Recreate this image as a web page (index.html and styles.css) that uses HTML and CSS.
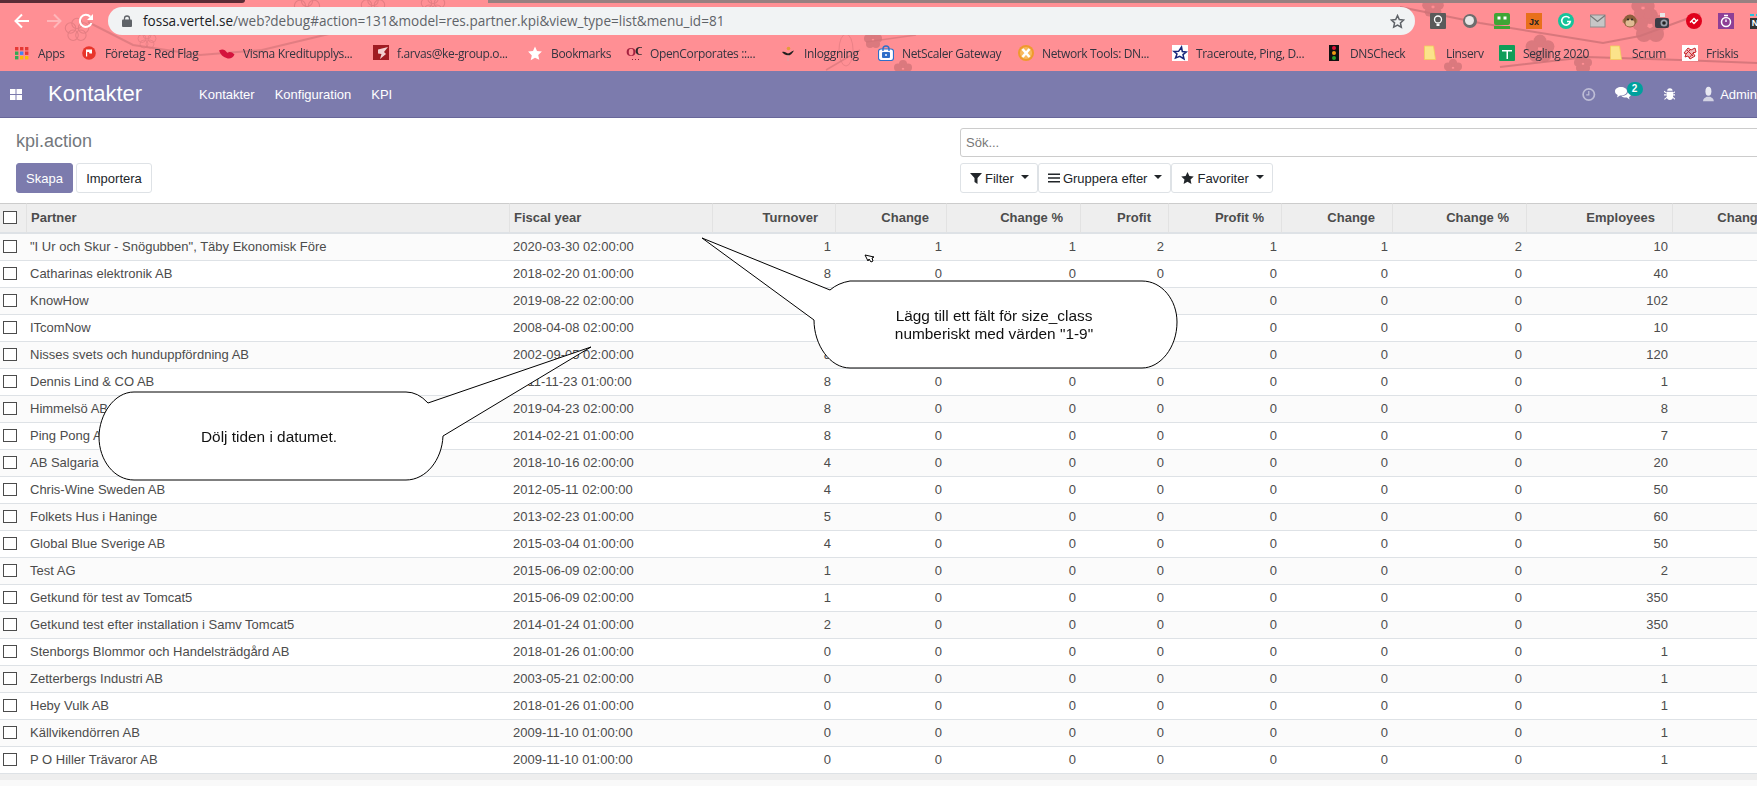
FILE: index.html
```html
<!DOCTYPE html>
<html lang="sv">
<head>
    <meta charset="UTF-8">
    <meta name="viewport" content="width=device-width, initial-scale=1.0">
    <title>kpi.action - Odoo</title>
    <link rel="stylesheet" href="styles.css">
</head>
<body>
    <!-- browser window -->
    <div class="browser">
        <svg class="theme-art" width="1757" height="71" viewBox="0 0 1757 71">
            <defs>
                <g id="petals"><circle cx="0" cy="-5" r="4"/><circle cx="5" cy="-1.500" r="4"/><circle cx="3" cy="4" r="4"/><circle cx="-3" cy="4" r="4"/><circle cx="-5" cy="-1.500" r="4"/></g>
            </defs>
            <g fill="none" stroke="#cf7277" opacity=".6">
                <path stroke-width="2" d="M88 22 L133 45 L200 55 L262 50 L333 33 L370 18"/>
                <path stroke-width="1.500" d="M826 70 L860 50 M866 42 L916 35"/>
            </g>
            <g fill="none" stroke="#cf7277" stroke-width="2" opacity=".8">
                <path d="M1400 7 L1480 23 L1603 43 L1640 36 L1700 14"/>
                <path d="M1500 67 L1587 57 L1680 60 L1757 63"/>
            </g>
            <g fill="none" stroke="#d9777c" stroke-width=".800" opacity=".7">
                <use href="#petals" transform="translate(77 30) scale(1.300)"/>
                <use href="#petals" transform="translate(147 40)"/>
                <use href="#petals" transform="translate(307 8) scale(1.400)"/>
                <use href="#petals" transform="translate(373 7) scale(1.300)"/>
                <use href="#petals" transform="translate(433 5) scale(1.300)"/>
                <ellipse cx="846" cy="50" rx="7" ry="16"/>
            </g>
            <g fill="#cf7277" opacity=".75">
                <use href="#petals" transform="translate(873 40)"/>
                <use href="#petals" transform="translate(903 69)"/>
                <use href="#petals" transform="translate(1433 7) scale(1.200)"/>
                <use href="#petals" transform="translate(1453 68)"/>
                <use href="#petals" transform="translate(1540 49) scale(1.600)"/>
                <use href="#petals" transform="translate(1583 64)"/>
                <use href="#petals" transform="translate(1650 26) scale(2)"/>
                <use href="#petals" transform="translate(1643 8) scale(1.300)"/>
            </g>
        </svg>
        <div class="tabstrip">
            <div class="tab-dark"></div>
            <div class="tab-gap"></div>
            <div class="tab-rest"></div>
        </div>
        <div class="toolbar">
            <div class="nav-arrows">
                <svg width="16" height="16" viewBox="0 0 16 16"><path d="M15 8H2M8 1.500L1.500 8 8 14.500" fill="none" stroke="#fff" stroke-width="2"/></svg>
                <svg class="arrow-off" width="16" height="16" viewBox="0 0 16 16"><path d="M1 8H14M8 1.500L14.500 8 8 14.500" fill="none" stroke="#fff" stroke-width="2"/></svg>
                <svg width="16" height="16" viewBox="0 0 16 16"><path d="M13.500 10A6 6 0 1 1 12.300 3.800" fill="none" stroke="#fff" stroke-width="2"/><path d="M15 1v6H9z" fill="#fff"/></svg>
            </div>
            <div class="address-bar">
                <svg class="lock" width="10" height="12" viewBox="0 0 10 12"><path d="M2.500 5V3.500a2.500 2.500 0 0 1 5 0V5" fill="none" stroke="#5f6368" stroke-width="1.300"/><rect y="4.500" width="10" height="7.500" rx="1" fill="#5f6368"/></svg>
                <span class="url"><span class="url-host">fossa.vertel.se</span>/web?debug#action=131&amp;model=res.partner.kpi&amp;view_type=list&amp;menu_id=81</span>
                <svg class="url-star" width="15" height="15" viewBox="0 0 24 24"><path d="M12 2.500l2.900 6.300 6.900.8-5.100 4.700 1.400 6.800L12 17.600 5.900 21l1.400-6.800L2.200 9.600l6.900-.8z" fill="none" stroke="#5f6368" stroke-width="2.400"/></svg>
            </div>
            <div class="extensions">
                <svg width="16" height="16" viewBox="0 0 16 16"><rect width="16" height="16" rx="1" fill="#5a5a5a"/><circle cx="8" cy="6.500" r="3.500" fill="none" stroke="#fff" stroke-width="1.300"/><path d="M6.500 11h3v2h-3z" fill="#fff"/></svg>
                <svg width="16" height="16" viewBox="0 0 16 16"><circle cx="8" cy="8" r="7" fill="#6d6d6d"/><circle cx="7.500" cy="7.500" r="4.500" fill="#e8e8e8"/></svg>
                <svg width="16" height="16" viewBox="0 0 16 16"><rect width="16" height="12" rx="2" fill="#3fa535"/><rect x="3.500" y="3.500" width="3" height="3" fill="#fff"/><rect x="9.500" y="3.500" width="3" height="3" fill="#fff"/><rect y="13" width="16" height="3" fill="#3fa535"/></svg>
                <svg width="16" height="16" viewBox="0 0 16 16"><rect width="16" height="16" fill="#e8701a"/><text x="8" y="12" class="ext-label">Jx</text></svg>
                <svg width="16" height="16" viewBox="0 0 16 16"><circle cx="8" cy="8" r="8" fill="#15c39a"/><path d="M11.500 5.200A4.300 4.300 0 1 0 12.300 8.500H9" fill="none" stroke="#fff" stroke-width="1.600"/></svg>
                <svg width="16" height="16" viewBox="0 0 16 16"><rect y="2" width="15" height="12" fill="#c6c6c6" stroke="#8c8c8c"/><path d="M0 2.500l7.500 6 7.500-6" fill="none" stroke="#777" stroke-width="1.200"/></svg>
                <svg width="16" height="16" viewBox="0 0 16 16"><circle cx="2.500" cy="8" r="2.200" fill="#b5865c"/><circle cx="13.500" cy="8" r="2.200" fill="#b5865c"/><circle cx="8" cy="8" r="6.500" fill="#8b5e3c"/><ellipse cx="8" cy="10" rx="4.500" ry="3.500" fill="#e0bc94"/><circle cx="6" cy="6.500" r="1" fill="#222"/><circle cx="10" cy="6.500" r="1" fill="#222"/></svg>
                <svg width="16" height="16" viewBox="0 0 16 16"><rect x="6" y="0" width="5" height="4" fill="#e8e8e8"/><rect x="1" y="5" width="14" height="10" rx="2" fill="#3c3c46"/><circle cx="10" cy="10" r="3.500" fill="#9aa0aa"/><circle cx="10" cy="10" r="1.800" fill="#222"/></svg>
                <svg width="16" height="16" viewBox="0 0 16 16"><circle cx="8" cy="8" r="8" fill="#e0001b"/><path d="M4 9.500l4-4 2 2M12 6.500l-4 4-2-2" fill="none" stroke="#fff" stroke-width="1.400"/></svg>
                <svg width="16" height="16" viewBox="0 0 16 16"><rect width="16" height="16" fill="#8e3f96"/><circle cx="8" cy="9" r="4.500" fill="none" stroke="#fff" stroke-width="1.500"/><path d="M6 2.500h4M8 9V6.500" stroke="#fff" stroke-width="1.400"/></svg>
                <svg width="16" height="16" viewBox="0 0 16 16"><rect y="5" width="16" height="11" fill="#333"/><path d="M0 2h4M6 2h4M12 2h4" stroke="#24c6dc" stroke-width="2"/><text x="8" y="13" class="ext-label ext-light">NE</text></svg>
            </div>
        </div>
        <div class="bookmarks">
            <div class="bookmark"><svg width="16" height="16" viewBox="0 0 16 16"><rect x="1" y="2" width="3.400" height="3.400" fill="#e53935"/><rect x="6" y="2" width="3.400" height="3.400" fill="#e53935"/><rect x="11" y="2" width="3.400" height="3.400" fill="#e53935"/><rect x="1" y="6.500" width="3.400" height="3.400" fill="#34a853"/><rect x="6" y="6.500" width="3.400" height="3.400" fill="#4285f4"/><rect x="11" y="6.500" width="3.400" height="3.400" fill="#e53935"/><rect x="1" y="11" width="3.400" height="3.400" fill="#34a853"/><rect x="6" y="11" width="3.400" height="3.400" fill="#fbbc05"/><rect x="11" y="11" width="3.400" height="3.400" fill="#fbbc05"/></svg><span>Apps</span></div>
            <div class="bookmark"><svg width="16" height="16" viewBox="0 0 16 16"><circle cx="8" cy="8" r="6.800" fill="#e8352b"/><path d="M5 4.500h6v4H8.500L8 7H6.200v4.500H5z" fill="#fff"/></svg><span>Företag - Red Flag</span></div>
            <div class="bookmark"><svg width="16" height="16" viewBox="0 0 16 16"><path d="M0 5.500C4 3.500 6 5 8 7.500c2.500-1 5-1 7.500 2-1.500 3.500-5 5-8 3.500C4 12 1.500 9.500 0 5.500z" fill="#d4133c"/><path d="M6 2l3 5.500" stroke="#ff8f94" stroke-width="1.200"/></svg><span>Visma Kreditupplys...</span></div>
            <div class="bookmark"><svg width="16" height="16" viewBox="0 0 16 16"><rect width="16" height="15" fill="#a01c22"/><path d="M5 4.500l10-2.500-4 5 2 2-6 5 1.500-5L5 8.500z" fill="#f3d0d0"/></svg><span>f.arvas@ke-group.o...</span></div>
            <div class="bookmark"><svg width="16" height="16" viewBox="0 0 16 16"><path d="M8 1.500l2 4.600 4.900.5-3.700 3.300 1.100 4.900L8 12.700l-4.300 2.600 1.100-4.900L1.100 6.600 6 6.100z" fill="#fff"/></svg><span>Bookmarks</span></div>
            <div class="bookmark"><svg width="16" height="16" viewBox="0 0 16 16"><text x="0" y="11" class="oc-label">O</text><text x="9" y="10" class="oc-label oc-dark">C</text><path d="M6 14.500h1M9 14.500h1M12 14.500h1" stroke="#8a1c38"/></svg><span>OpenCorporates ::...</span></div>
            <div class="bookmark"><svg width="16" height="16" viewBox="0 0 16 16"><path d="M2 7c3-1 4 1 6 1.500 2-.5 3-2 6-3-1.500 3-4 5-6 5C5.500 10 4 9.500 2 7z" fill="#1f1f1f"/><circle cx="8.500" cy="3.500" r="1.800" fill="#e59b3a"/><path d="M8 10v6" stroke="#d9a5a7"/></svg><span>Inloggning</span></div>
            <div class="bookmark"><svg width="16" height="16" viewBox="0 0 16 16"><rect x=".5" y="4" width="15" height="11.500" rx="2.500" fill="#fff" stroke="#2f6fc9" stroke-width="1.200"/><path d="M5 6V4a3 3 0 0 1 6 0v2" fill="none" stroke="#2f6fc9" stroke-width="1.400"/><rect x="4" y="7" width="8" height="6" rx="1" fill="#2f6fc9"/><circle cx="8" cy="10" r="1" fill="#fff"/></svg><span>NetScaler Gateway</span></div>
            <div class="bookmark"><svg width="16" height="16" viewBox="0 0 16 16"><circle cx="8" cy="8" r="8" fill="#ef9a2d"/><circle cx="8" cy="8" r="6" fill="#f7b95e"/><path d="M4.500 4l7 8M11.500 4l-7 8" stroke="#fff" stroke-width="2.600"/></svg><span>Network Tools: DN...</span></div>
            <div class="bookmark"><svg width="16" height="16" viewBox="0 0 16 16"><rect width="16" height="16" fill="#fff"/><path d="M9.500 2l.8 4.500 4 .5-3.300 2.600 1 4.400-4.200-2.700L3.500 13l1.500-4L2 6.500l4.600-.2z" fill="#fff" stroke="#15267a" stroke-width="1.500"/></svg><span>Traceroute, Ping, D...</span></div>
            <div class="bookmark"><svg width="16" height="16" viewBox="0 0 16 16"><rect x="3" width="10" height="16" fill="#111"/><circle cx="8" cy="3" r="2" fill="#e0123a"/><circle cx="8" cy="8" r="2" fill="#f39c12"/><circle cx="8" cy="13" r="2" fill="#2ca02c"/></svg><span>DNSCheck</span></div>
            <div class="bookmark"><svg width="16" height="16" viewBox="0 0 16 16"><path d="M2.500 1h9l2 13.500h-11z" fill="#fbe38a" stroke="#f0ce5a" stroke-width=".800"/></svg><span>Linserv</span></div>
            <div class="bookmark"><svg width="16" height="16" viewBox="0 0 16 16"><rect width="16" height="16" rx="1" fill="#0f9d58"/><path d="M3 5h10v1.500H9V14H7.500V6.500H3z" fill="#fff"/></svg><span>Segling 2020</span></div>
            <div class="bookmark"><svg width="16" height="16" viewBox="0 0 16 16"><path d="M2.500 1h9l2 13.500h-11z" fill="#fbe38a" stroke="#f0ce5a" stroke-width=".800"/></svg><span>Scrum</span></div>
            <div class="bookmark"><svg width="16" height="16" viewBox="0 0 16 16"><rect width="16" height="16" fill="#fff"/><path d="M2 8l4-5 3 2 4-2 1 4-3 1 2 3-5 3-2-3-3 1 1-3zM5 5l6 6M4 9l5-5M7 13l5-6" fill="#f2b8ba" stroke="#c8262c" stroke-width="1"/></svg><span>Friskis</span></div>
        </div>
    </div>

    <!-- odoo menu -->
    <header class="main-navbar">
        <svg class="apps-icon" width="12" height="11" viewBox="0 0 12 11"><path d="M0 0h5.500v5H0zM6.500 0H12v5H6.500zM0 6h5.500v5H0zM6.500 6H12v5H6.500z" fill="#fff"/></svg>
        <a class="brand">Kontakter</a>
        <nav class="main-menu">
            <a>Kontakter</a>
            <a>Konfiguration</a>
            <a>KPI</a>
        </nav>
        <div class="systray">
            <svg class="clock" width="15" height="15" viewBox="0 0 16 16"><circle cx="8" cy="8" r="6.700" fill="none" stroke="#fff" stroke-width="2"/><path d="M8 4v4.500H5" fill="none" stroke="#fff" stroke-width="1.500"/></svg>
            <div class="chat">
                <svg width="16" height="14" viewBox="0 0 16 14"><path d="M6 0c3.300 0 6 1.800 6 4.200S9.300 8.500 6 8.500H5L2 10.500l.7-2.600C1 7.200 0 5.800 0 4.200 0 1.800 2.700 0 6 0z" fill="#fff"/><path d="M13 4c1.800.6 3 1.800 3 3.200 0 1.200-.8 2.200-2 2.900l.5 2.400-2.600-2c-2.400.2-4.400-.4-5.400-1.500 3.500 0 6.600-1.700 6.500-5z" fill="#fff"/></svg>
                <span class="badge">2</span>
            </div>
            <svg class="bug" width="13" height="14" viewBox="0 0 13 14"><path d="M3.500 3.500a3 3 0 0 1 6 0zM3 4.500h7v5.500a3.500 3.500 0 0 1-7 0z" fill="#fff"/><path d="M0 4l3 2M13 4l-3 2M0 8h3M13 8h-3M0.500 13l3-2.500M12.500 13l-3-2.500" stroke="#fff" stroke-width="1.200"/></svg>
            <svg class="user-icon" width="12" height="16" viewBox="0 0 12 16"><ellipse cx="6" cy="5" rx="3.300" ry="5" fill="#e9e9f2"/><path d="M0 16c0-3 2.500-4 4-5h4c1.500 1 4 2 4 5z" fill="#d3d3e3"/></svg>
            <span class="user-name">Admin</span>
        </div>
    </header>

    <!-- control panel -->
    <section class="control-panel">
        <div class="cp-left">
            <div class="cp-title">kpi.action</div>
            <div class="cp-buttons">
                <button class="btn btn-primary">Skapa</button>
                <button class="btn btn-secondary">Importera</button>
            </div>
        </div>
        <div class="cp-right">
            <div class="search-box">Sök...</div>
            <div class="cp-buttons cp-filters">
                <button class="btn btn-filter"><svg width="12" height="12" viewBox="0 0 12 12"><path d="M0 1h12L7.500 6v6l-3-2V6z" fill="#212529"/></svg>Filter<i class="caret"></i></button>
                <button class="btn btn-filter"><svg width="12" height="12" viewBox="0 0 12 12"><path d="M0 1.500h12v1.600H0zM0 5.200h12v1.600H0zM0 8.900h12v1.600H0z" fill="#212529"/></svg>Gruppera efter<i class="caret"></i></button>
                <button class="btn btn-filter"><svg width="13" height="12" viewBox="0 0 24 23"><path d="M12 0l3.600 7.800 8.400 1-6.200 5.800 1.700 8.400L12 18.800 4.500 23l1.700-8.400L0 8.800l8.400-1z" fill="#212529"/></svg>Favoriter<i class="caret"></i></button>
            </div>
        </div>
    </section>

    <!-- list view -->
    <table class="list-view">
        <colgroup>
            <col class="c-check"><col class="c-partner"><col class="c-year"><col class="c-turnover"><col class="c-change"><col class="c-pct"><col class="c-profit"><col class="c-profit-pct"><col class="c-change2"><col class="c-pct2"><col class="c-employees"><col class="c-last">
        </colgroup>
        <thead>
            <tr><th><i class="checkbox"></i></th><th class="left">Partner</th><th class="left">Fiscal year</th><th>Turnover</th><th>Change</th><th>Change %</th><th>Profit</th><th>Profit %</th><th>Change</th><th>Change %</th><th>Employees</th><th>Change</th></tr>
        </thead>
        <tbody>
            <tr><td><i class="checkbox"></i></td><td class="left">"I Ur och Skur - Snögubben", Täby Ekonomisk Före</td><td class="left">2020-03-30 02:00:00</td><td>1</td><td>1</td><td>1</td><td>2</td><td>1</td><td>1</td><td>2</td><td>10</td><td>0</td></tr>
            <tr><td><i class="checkbox"></i></td><td class="left">Catharinas elektronik AB</td><td class="left">2018-02-20 01:00:00</td><td>8</td><td>0</td><td>0</td><td>0</td><td>0</td><td>0</td><td>0</td><td>40</td><td>0</td></tr>
            <tr><td><i class="checkbox"></i></td><td class="left">KnowHow</td><td class="left">2019-08-22 02:00:00</td><td>8</td><td>0</td><td>0</td><td>0</td><td>0</td><td>0</td><td>0</td><td>102</td><td>0</td></tr>
            <tr><td><i class="checkbox"></i></td><td class="left">ITcomNow</td><td class="left">2008-04-08 02:00:00</td><td>8</td><td>0</td><td>0</td><td>0</td><td>0</td><td>0</td><td>0</td><td>10</td><td>0</td></tr>
            <tr><td><i class="checkbox"></i></td><td class="left">Nisses svets och hunduppfördning AB</td><td class="left">2002-09-05 02:00:00</td><td>8</td><td>0</td><td>0</td><td>0</td><td>0</td><td>0</td><td>0</td><td>120</td><td>0</td></tr>
            <tr><td><i class="checkbox"></i></td><td class="left">Dennis Lind &amp; CO AB</td><td class="left">2011-11-23 01:00:00</td><td>8</td><td>0</td><td>0</td><td>0</td><td>0</td><td>0</td><td>0</td><td>1</td><td>0</td></tr>
            <tr><td><i class="checkbox"></i></td><td class="left">Himmelsö AB</td><td class="left">2019-04-23 02:00:00</td><td>8</td><td>0</td><td>0</td><td>0</td><td>0</td><td>0</td><td>0</td><td>8</td><td>0</td></tr>
            <tr><td><i class="checkbox"></i></td><td class="left">Ping Pong AB</td><td class="left">2014-02-21 01:00:00</td><td>8</td><td>0</td><td>0</td><td>0</td><td>0</td><td>0</td><td>0</td><td>7</td><td>0</td></tr>
            <tr><td><i class="checkbox"></i></td><td class="left">AB Salgaria</td><td class="left">2018-10-16 02:00:00</td><td>4</td><td>0</td><td>0</td><td>0</td><td>0</td><td>0</td><td>0</td><td>20</td><td>0</td></tr>
            <tr><td><i class="checkbox"></i></td><td class="left">Chris-Wine Sweden AB</td><td class="left">2012-05-11 02:00:00</td><td>4</td><td>0</td><td>0</td><td>0</td><td>0</td><td>0</td><td>0</td><td>50</td><td>0</td></tr>
            <tr><td><i class="checkbox"></i></td><td class="left">Folkets Hus i Haninge</td><td class="left">2013-02-23 01:00:00</td><td>5</td><td>0</td><td>0</td><td>0</td><td>0</td><td>0</td><td>0</td><td>60</td><td>0</td></tr>
            <tr><td><i class="checkbox"></i></td><td class="left">Global Blue Sverige AB</td><td class="left">2015-03-04 01:00:00</td><td>4</td><td>0</td><td>0</td><td>0</td><td>0</td><td>0</td><td>0</td><td>50</td><td>0</td></tr>
            <tr><td><i class="checkbox"></i></td><td class="left">Test AG</td><td class="left">2015-06-09 02:00:00</td><td>1</td><td>0</td><td>0</td><td>0</td><td>0</td><td>0</td><td>0</td><td>2</td><td>0</td></tr>
            <tr><td><i class="checkbox"></i></td><td class="left">Getkund för test av Tomcat5</td><td class="left">2015-06-09 02:00:00</td><td>1</td><td>0</td><td>0</td><td>0</td><td>0</td><td>0</td><td>0</td><td>350</td><td>0</td></tr>
            <tr><td><i class="checkbox"></i></td><td class="left">Getkund test efter installation i Samv Tomcat5</td><td class="left">2014-01-24 01:00:00</td><td>2</td><td>0</td><td>0</td><td>0</td><td>0</td><td>0</td><td>0</td><td>350</td><td>0</td></tr>
            <tr><td><i class="checkbox"></i></td><td class="left">Stenborgs Blommor och Handelsträdgård AB</td><td class="left">2018-01-26 01:00:00</td><td>0</td><td>0</td><td>0</td><td>0</td><td>0</td><td>0</td><td>0</td><td>1</td><td>0</td></tr>
            <tr><td><i class="checkbox"></i></td><td class="left">Zetterbergs Industri AB</td><td class="left">2003-05-21 02:00:00</td><td>0</td><td>0</td><td>0</td><td>0</td><td>0</td><td>0</td><td>0</td><td>1</td><td>0</td></tr>
            <tr><td><i class="checkbox"></i></td><td class="left">Heby Vulk AB</td><td class="left">2018-01-26 01:00:00</td><td>0</td><td>0</td><td>0</td><td>0</td><td>0</td><td>0</td><td>0</td><td>1</td><td>0</td></tr>
            <tr><td><i class="checkbox"></i></td><td class="left">Källvikendörren AB</td><td class="left">2009-11-10 01:00:00</td><td>0</td><td>0</td><td>0</td><td>0</td><td>0</td><td>0</td><td>0</td><td>1</td><td>0</td></tr>
            <tr><td><i class="checkbox"></i></td><td class="left">P O Hiller Trävaror AB</td><td class="left">2009-11-10 01:00:00</td><td>0</td><td>0</td><td>0</td><td>0</td><td>0</td><td>0</td><td>0</td><td>1</td><td>0</td></tr>
        </tbody>
        <tfoot>
            <tr><td colspan="12"></td></tr>
        </tfoot>
    </table>

    <!-- speech bubbles drawn on top of the screenshot -->
    <svg class="annotations" width="1757" height="786" viewBox="0 0 1757 786">
        <path class="bubble" d="M702 238 L830 290 Q838 283 850 281 L1142 281 C1162 281 1177 300 1177 322 C1177 348 1160 368 1142 368 L850 368 C830 368 814 345 814 320 Z"/>
        <text class="bubble-text" x="994" y="321">Lägg till ett fält för size_class</text>
        <text class="bubble-text" x="994" y="339">numberiskt med värden "1-9"</text>
        <path class="bubble" d="M591 347 L428 403 Q418 392 406 392 L134 392 C114 392 99 415 99 437 C99 460 114 480 134 480 L406 480 C426 480 442 460 443 436 Z"/>
        <text class="bubble-text" x="269" y="442">Dölj tiden i datumet.</text>
        <path d="M865 255l3 6 1-2 2 3 2-1-1-3 2-1z" fill="#fff" stroke="#000"/>
    </svg>
</body>
</html>
```

FILE: styles.css
```css
* {
    box-sizing: border-box;
}

html, body {
    height: 100%;
}

body {
    margin: 0;
    overflow: hidden;
    position: relative;
    background: #f9f9f9;
    color: #4c4c4c;
    font-family: "Liberation Sans", Arial, sans-serif;
    font-size: 13px;
}

/* browser window */
.browser {
    position: relative;
    height: 71px;
    background: #ff8f94;
    overflow: hidden;
}

.theme-art {
    position: absolute;
    left: 0;
    top: 0;
}

.tabstrip, .toolbar, .bookmarks {
    position: relative;
}

.tabstrip {
    display: flex;
    height: 7px;
}

.tab-dark {
    width: 245px;
    height: 3px;
    background: #5a2c36;
    border-bottom-right-radius: 3px;
}

.tab-gap {
    width: 243px;
}

.tab-rest {
    flex: 1;
    height: 3px;
    background: #978081;
}

.toolbar {
    display: flex;
    align-items: center;
    height: 28px;
}

.nav-arrows {
    display: flex;
    gap: 16px;
    width: 108px;
    flex: none;
    padding-left: 14px;
}

.arrow-off {
    opacity: .35;
}

.address-bar {
    display: flex;
    align-items: center;
    flex: none;
    width: 1307px;
    height: 28px;
    padding: 0 10px 0 14px;
    background: #f1f3f4;
    border-radius: 14px;
    font-family: "Open Sans", sans-serif;
}

.lock {
    margin-right: 11px;
    flex: none;
}

.url {
    flex: 1;
    font-size: 13.550px;
    color: #5f6368;
    white-space: nowrap;
}

.url-host {
    color: #202124;
}

.extensions {
    display: flex;
    flex: none;
    gap: 16px;
    margin-left: 15px;
}

.extensions svg {
    flex: none;
}

.ext-label {
    font-family: "Liberation Sans", sans-serif;
    font-size: 9px;
    font-weight: 700;
    text-anchor: middle;
    fill: #222;
}

.ext-light {
    fill: #fff;
}

.bookmarks {
    display: grid;
    grid-template-columns: 67px 138px 154px 154px 99px 154px 98px 140px 154px 154px 96px 77px 109px 74px 75px;
    align-items: center;
    height: 36px;
    padding-left: 14px;
    font-family: "Open Sans", sans-serif;
    font-size: 12px;
    letter-spacing: -.35px;
    color: #343440;
}

.bookmark {
    display: flex;
    align-items: center;
    gap: 8px;
    white-space: nowrap;
}

.bookmark svg {
    flex: none;
}

.oc-label {
    font-family: "Liberation Serif", serif;
    font-size: 13px;
    font-weight: 700;
    fill: #a5213f;
}

.oc-dark {
    fill: #2b2b2b;
}

/* odoo menu */
.main-navbar {
    position: relative;
    display: flex;
    align-items: center;
    height: 47px;
    background: #7c7bad;
    border-bottom: 1px solid #68679a;
    color: #fff;
}

.apps-icon {
    margin-left: 10px;
    flex: none;
}

.brand {
    margin-left: 26px;
    font-size: 22px;
    width: 151px;
}

.main-menu {
    display: flex;
    gap: 20px;
}

.systray {
    display: flex;
    align-items: center;
    margin-left: auto;
    flex: none;
    width: 175px;
}

.clock {
    opacity: .5;
    margin-right: 19px;
}

.chat {
    position: relative;
    display: flex;
    margin-right: 33px;
}

.badge {
    position: absolute;
    left: 12px;
    top: -5px;
    width: 16px;
    height: 14px;
    border-radius: 7px;
    background: #00a09d;
    font-size: 10px;
    font-weight: 700;
    line-height: 14px;
    text-align: center;
}

.bug {
    margin-right: 28px;
}

.user-icon {
    margin-right: 6px;
}

/* control panel */
.control-panel {
    display: flex;
    height: 85px;
    padding: 10px 0 10px 16px;
    background: #fff;
}

.cp-left {
    width: 944px;
    flex: none;
}

.cp-title {
    height: 29px;
    font-size: 18px;
    line-height: 27px;
    color: #74787d;
}

.cp-buttons {
    display: flex;
    gap: 3px;
    margin-top: 6px;
}

.btn {
    height: 30px;
    padding: 0 9px;
    border-radius: 3px;
    font-family: inherit;
    font-size: 13px;
    background: #fff;
    color: #212529;
    border: 1px solid #dee2e6;
}

.btn-primary {
    width: 57px;
    background: #7c7bad;
    border-color: #7c7bad;
    color: #fff;
}

.btn-secondary {
    width: 76px;
}

.cp-right {
    width: 1000px;
    flex: none;
}

.search-box {
    height: 29px;
    padding-left: 5px;
    border: 1px solid #ccc;
    border-radius: 3px;
    color: #777;
    font-size: 13px;
    line-height: 27px;
}

.cp-filters {
    gap: 0;
}

.btn-filter {
    display: flex;
    align-items: center;
    gap: 3px;
    padding: 0 8px 0 9px;
}

.caret {
    width: 0;
    height: 0;
    margin-left: 4px;
    border-top: 4px solid #212529;
    border-left: 4px solid transparent;
    border-right: 4px solid transparent;
    position: relative;
    top: -1px;
}

/* list view */
.list-view {
    width: 1783px;
    table-layout: fixed;
    border-collapse: separate;
    border-spacing: 0;
    background: #fff;
}

.c-check { width: 27px; }
.c-partner { width: 483px; }
.c-year { width: 203px; }
.c-turnover { width: 123px; }
.c-change { width: 111px; }
.c-pct { width: 134px; }
.c-profit { width: 88px; }
.c-profit-pct { width: 113px; }
.c-change2 { width: 111px; }
.c-pct2 { width: 134px; }
.c-employees { width: 146px; }
.c-last { width: 110px; }

.list-view th, .list-view td {
    padding: 0;
    text-align: right;
    white-space: nowrap;
    overflow: hidden;
}

.list-view th {
    height: 31px;
    padding: 0 17px 2px 0;
    background: #eee;
    border-top: 1px solid #ccc;
    border-bottom: 2px solid #dee2e6;
    border-right: 1px solid #e2e2e2;
    font-weight: 700;
    color: #4c4c4c;
}

.list-view td {
    height: 27px;
    padding: 0 5px 2px 0;
    border-bottom: 1px solid #dee2e6;
}

.list-view tbody tr:nth-child(odd) td {
    background: #fbfbfb;
}

.list-view th.left, .list-view td.left {
    text-align: left;
    padding-left: 3px;
}

.list-view th.left {
    padding-left: 4px;
}

.list-view th:first-child, .list-view td:first-child {
    padding: 0 0 1px 3px;
    text-align: left;
}

.checkbox {
    display: block;
    width: 14px;
    height: 13px;
    background: #fff;
    border: 1px solid #4c4c4c;
}

.list-view tfoot td {
    height: 6px;
    padding: 0;
    background: #eee;
    border: none;
}

/* speech bubbles */
.annotations {
    position: absolute;
    left: 0;
    top: 0;
    pointer-events: none;
}

.bubble {
    fill: #fff;
    stroke: #000;
    stroke-width: 1;
}

.bubble-text {
    font-family: "Liberation Sans", Arial, sans-serif;
    font-size: 15.400px;
    text-anchor: middle;
    fill: #111;
}
```
